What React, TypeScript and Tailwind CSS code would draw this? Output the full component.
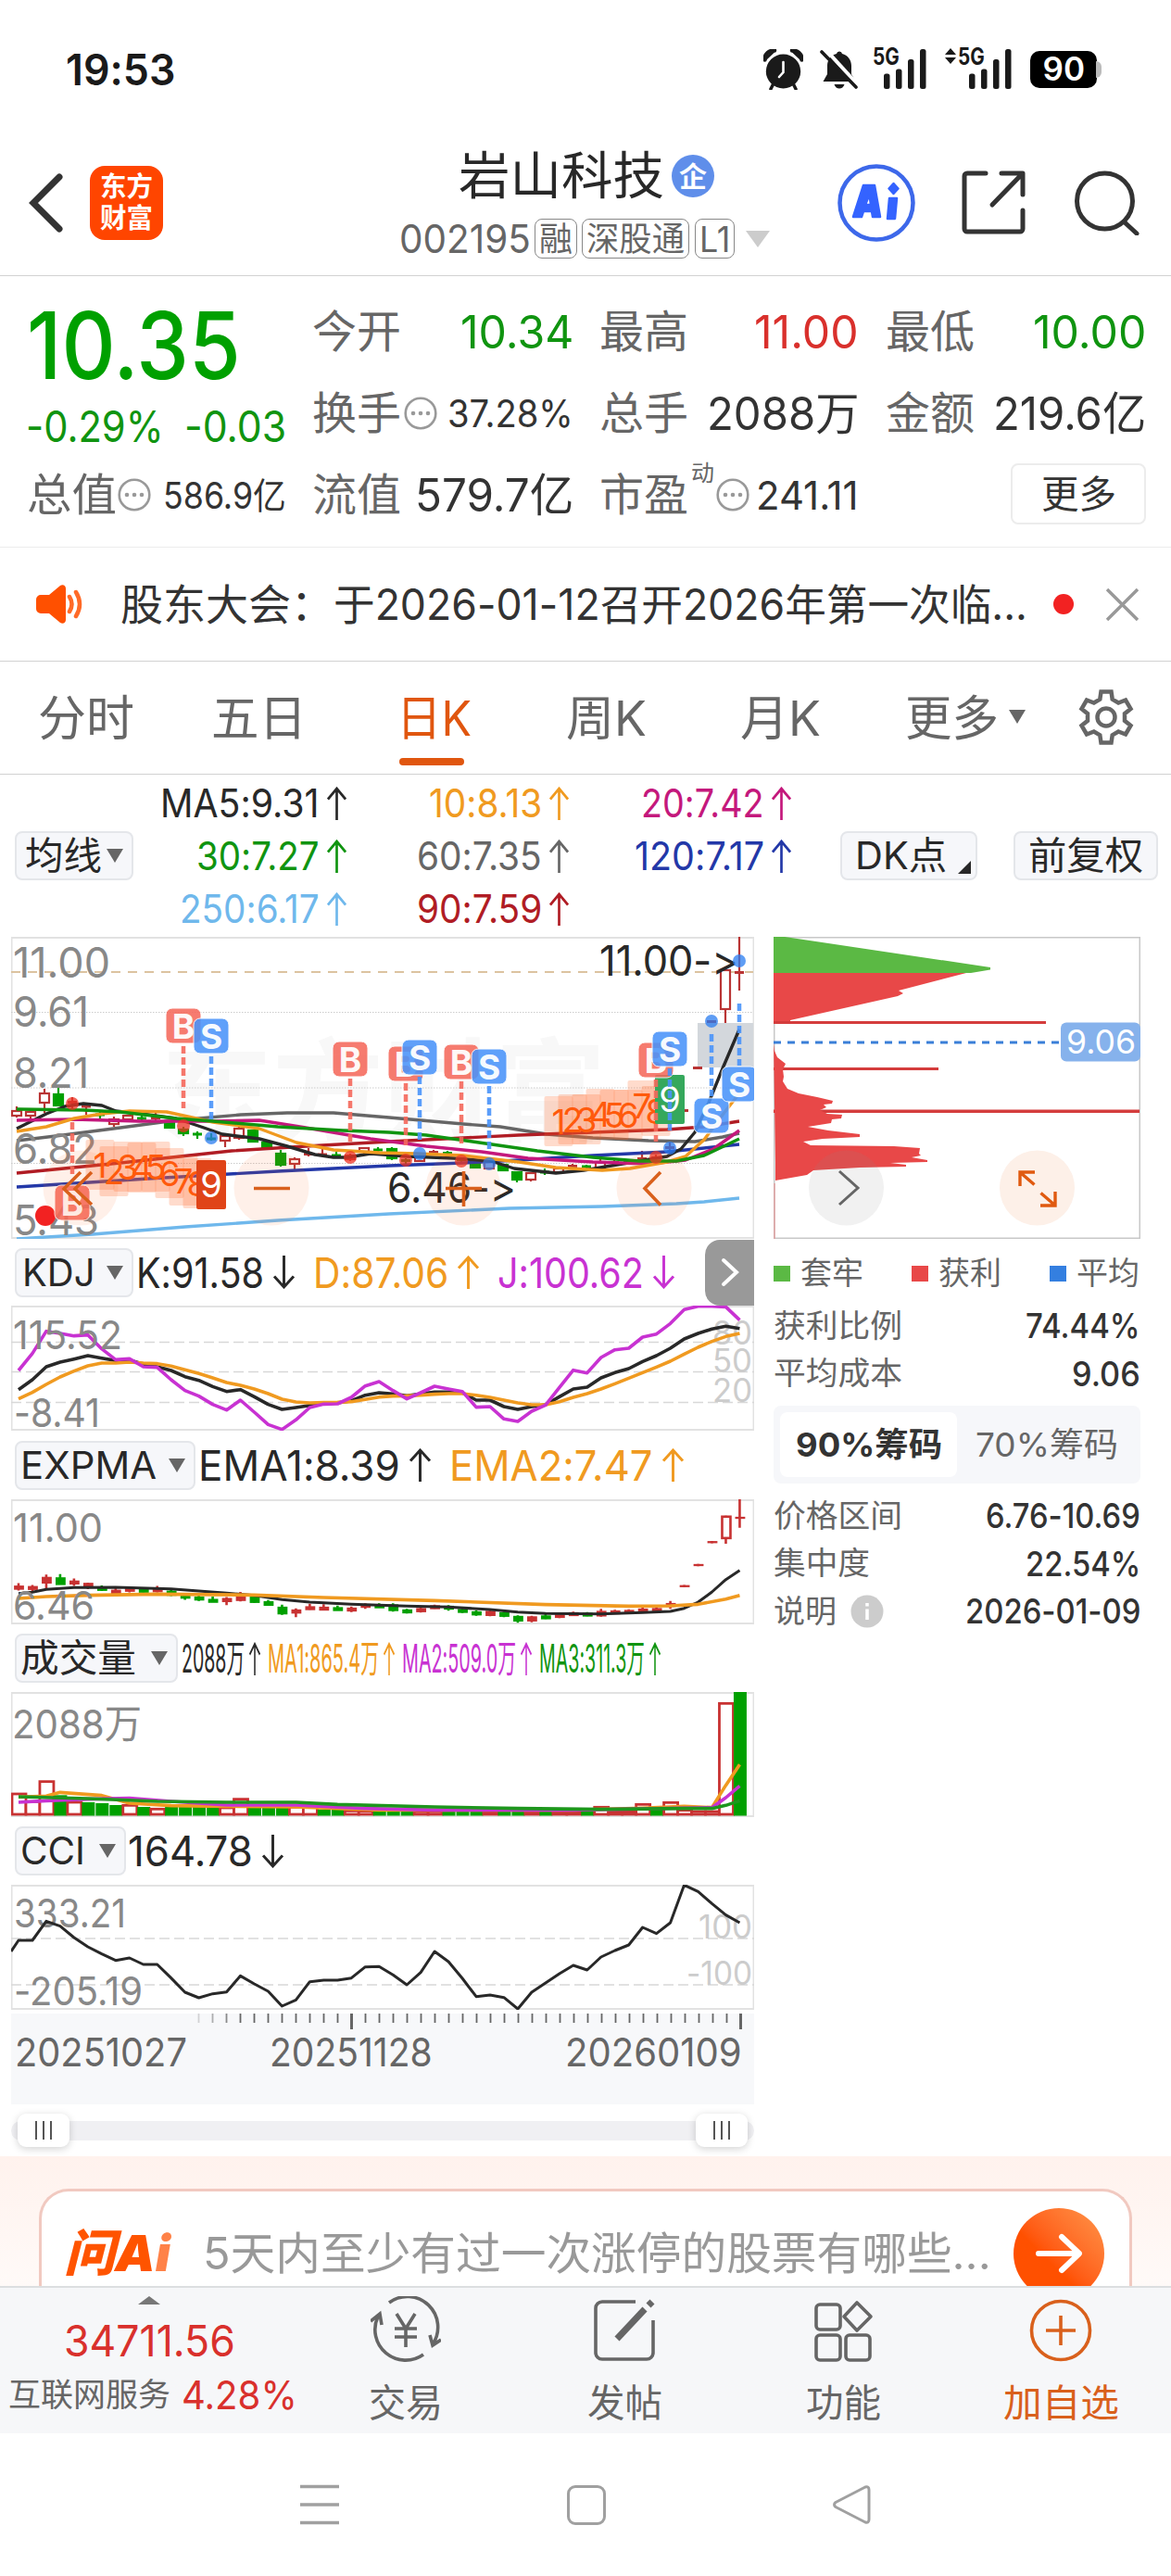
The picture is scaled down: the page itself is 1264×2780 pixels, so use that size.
import { useLayoutEffect, useRef } from "react";
import type { ReactNode } from "react";

const FONT = "Inter, 'Noto Sans CJK SC', sans-serif";

// ---------- chart data ----------

// kind, body top, body bottom, wick top, wick bottom
type Candle = ["r" | "g", number, number, number, number];

const CANDLES: Candle[] = [
  ["r", 1199, 1204, 1194, 1206], ["r", 1200, 1204, 1198, 1208], ["r", 1180, 1190, 1175, 1201], ["g", 1181, 1193, 1174, 1193],
  ["r", 1188, 1191, 1184, 1196], ["r", 1193, 1195, 1193, 1203], ["g", 1202, 1204, 1199, 1207], ["r", 1208, 1213, 1205, 1216],
  ["r", 1204, 1208, 1203, 1210], ["g", 1206, 1208, 1204, 1210], ["r", 1205, 1208, 1200, 1210], ["g", 1210, 1217, 1209, 1218],
  ["g", 1219, 1223, 1216, 1226], ["g", 1223, 1225, 1221, 1229], ["g", 1228, 1230, 1223, 1231], ["r", 1226, 1231, 1224, 1238],
  ["r", 1218, 1228, 1213, 1230], ["g", 1220, 1232, 1219, 1233], ["g", 1233, 1239, 1231, 1239], ["g", 1245, 1257, 1241, 1259],
  ["r", 1251, 1256, 1249, 1264], ["r", 1244, 1247, 1239, 1248], ["r", 1245, 1247, 1240, 1248], ["g", 1246, 1248, 1243, 1249],
  ["r", 1247, 1251, 1245, 1253], ["r", 1239, 1243, 1238, 1246], ["g", 1240, 1242, 1238, 1243], ["g", 1240, 1250, 1238, 1252],
  ["g", 1251, 1254, 1250, 1256], ["r", 1248, 1253, 1246, 1254], ["r", 1242, 1245, 1241, 1246], ["g", 1243, 1246, 1242, 1250],
  ["g", 1250, 1253, 1249, 1255], ["g", 1255, 1260, 1253, 1261], ["r", 1254, 1261, 1252, 1262], ["g", 1257, 1263, 1256, 1264],
  ["g", 1265, 1273, 1264, 1276], ["r", 1266, 1273, 1265, 1275], ["g", 1264, 1266, 1261, 1268], ["r", 1261, 1265, 1260, 1266],
  ["r", 1257, 1260, 1256, 1261], ["g", 1258, 1260, 1257, 1262], ["r", 1254, 1262, 1250, 1263], ["r", 1253, 1256, 1252, 1257],
  ["r", 1252, 1255, 1251, 1256], ["r", 1249, 1252, 1242, 1254], ["r", 1248, 1251, 1246, 1252], ["r", 1237, 1240, 1233, 1246],
  ["r", 1198, 1199, 1198, 1199], ["r", 1152, 1153, 1152, 1153], ["r", 1102, 1103, 1102, 1103], ["r", 1047, 1089, 1047, 1104],
  ["r", 1049, 1050, 1011, 1069],
];

const MA_LINES: [string, string][] = [
  ["#6fb8ec", "18,1337 100,1332 200,1324 300,1317 420,1310 550,1304 650,1302 730,1299 760,1297 798,1293"],
  ["#666666", "18,1231 60,1226 130,1217 190,1209 260,1203 310,1201 360,1201 420,1206 500,1213 540,1216 590,1224 640,1228 700,1231 750,1232 780,1227 798,1223"],
  ["#2338a8", "18,1281 160,1272 300,1264 420,1258 500,1255 560,1252 640,1247 720,1243 760,1239 798,1235"],
  ["#b01c24", "18,1266 130,1255 250,1242 330,1237 420,1232 500,1228 560,1225 640,1222 720,1219 760,1216 798,1210"],
  ["#282828", "18,1218 50,1202 70,1194 90,1191 110,1193 125,1199 160,1203 190,1207 220,1217 240,1224 280,1229 310,1237 340,1246 360,1249 375,1249 400,1245 440,1248 490,1250 530,1253 555,1261 600,1266 630,1263 660,1258 690,1253 720,1248 735,1240 750,1222 765,1190 780,1153 798,1111"],
  ["#c4187c", "18,1209 80,1208 150,1210 230,1210 280,1209 330,1217 400,1229 460,1237 520,1243 570,1250 640,1254 700,1256 740,1252 770,1240 798,1220"],
  ["#f09a20", "18,1221 50,1216 80,1207 110,1202 140,1199 180,1200 230,1211 280,1218 320,1233 360,1241 410,1244 450,1245 500,1247 560,1254 600,1260 650,1263 680,1261 720,1254 740,1248 760,1230 780,1203 798,1180"],
  ["#109410", "18,1197 90,1198 130,1200 190,1207 230,1210 300,1216 370,1220 420,1222 460,1225 510,1232 580,1242 640,1249 690,1253 730,1253 760,1247 798,1229"],
];

// kind, x, badge y, dot y, dash from, dash to
type Mark = ["B" | "S", number, number, number, number, number];

const MARKS: Mark[] = [
  ["B", 78, 1298, 1191, 1211, 1267],
  ["B", 198, 1107, 1215, 1129, 1196],
  ["S", 228, 1118, 1228, 1140, 1210],
  ["B", 378, 1143, 1249, 1164, 1232],
  ["B", 438, 1148, 1252, 1169, 1236],
  ["S", 453, 1141, 1245, 1162, 1230],
  ["B", 498, 1146, 1253, 1167, 1234],
  ["S", 528, 1151, 1256, 1172, 1240],
  ["B", 708, 1144, 1249, 1165, 1232],
  ["S", 723, 1132, 1239, 1153, 1220],
  ["S", 768, 1204, 1102, 1116, 1183],
  ["S", 798, 1170, 1037, 1083, 1150],
];

// TD sequence digits: x, vertical centre
const SEQ_A = [[108, 1257], [123, 1264], [138, 1259], [153, 1260], [168, 1259], [183, 1266], [198, 1274], [213, 1277]];
const SEQ_B = [[603, 1210], [618, 1208], [633, 1208], [648, 1202], [663, 1203], [678, 1203], [693, 1193], [708, 1199]];

// sub chart series are stored in thirds of a pixel
const KDJ_K = [332, 300, 258, 243, 233, 222, 230, 238, 236, 250, 258, 270, 290, 302, 322, 338, 332, 355, 380, 396, 390, 383, 378, 375, 368, 350, 342, 346, 352, 346, 340, 340, 342, 366, 366, 387, 396, 387, 381, 355, 330, 324, 294, 277, 264, 241, 222, 198, 168, 150, 136, 127, 134];
const KDJ_D = [362, 341, 315, 291, 272, 255, 246, 246, 243, 246, 248, 256, 268, 280, 294, 309, 318, 330, 345, 363, 372, 375, 374, 373, 371, 364, 356, 353, 352, 350, 347, 345, 345, 350, 357, 366, 375, 381, 381, 371, 357, 345, 330, 313, 295, 277, 259, 240, 217, 195, 176, 160, 150];
const KDJ_J = [270, 215, 143, 150, 158, 155, 200, 235, 232, 258, 260, 300, 335, 353, 380, 398, 366, 405, 445, 461, 430, 390, 379, 378, 357, 320, 306, 335, 362, 342, 321, 330, 338, 389, 387, 427, 435, 402, 382, 325, 269, 278, 228, 203, 198, 162, 152, 118, 73, 62, 62, 64, 107];
const CCI = [852, 852, 790, 806, 843, 873, 896, 917, 909, 930, 930, 974, 1020, 1038, 1025, 1019, 967, 993, 1017, 1065, 1045, 986, 981, 981, 974, 938, 937, 964, 996, 956, 888, 921, 975, 1034, 1029, 1037, 1074, 1020, 990, 960, 933, 948, 906, 885, 867, 810, 830, 795, 673, 694, 733, 770, 795];

const VOLUME = "r375 r400 r335 g382 r402 g405 g408 g414 r412 g420 r424 g420 g420 g420 g421 r420 r392 g420 g423 g420 r418 r418 g428 g429 r430 r431 g433 g430 g432 r432 r432 g433 g433 g433 r433 g434 g434 r433 g434 r433 r433 g434 r418 r433 r433 r409 g425 r403 r428 r432 r432 r82 g48".split(" ");

// sparse [index, value] series
const EMA1 = [[0, 990], [1, 986], [2, 977], [4, 971], [7, 970], [11, 975], [15, 989], [17, 996], [19, 1010], [21, 1018], [24, 1025], [28, 1031], [31, 1034], [34, 1042], [36, 1050], [38, 1055], [42, 1056], [45, 1052], [47, 1048], [48, 1038], [49, 1018], [50, 985], [51, 945], [52, 915]];
const EMA2 = [[0, 1006], [2, 1000], [5, 996], [10, 992], [17, 995], [22, 1003], [30, 1013], [38, 1026], [44, 1031], [47, 1030], [49, 1025], [51, 1008], [52, 996]];
const VOL1 = [[0, 388], [2, 385], [3, 373], [6, 383], [8, 408], [11, 416], [15, 418], [20, 420], [26, 430], [40, 430], [45, 424], [48, 418], [50, 422], [51, 350], [52, 283]];
const VOL2 = [[0, 405], [2, 400], [5, 395], [8, 392], [11, 402], [15, 414], [20, 414], [25, 425], [30, 430], [40, 430], [50, 422], [51, 390], [52, 352]];
const VOL3 = [[0, 387], [5, 393], [10, 402], [15, 405], [20, 405], [23, 412], [30, 420], [36, 425], [42, 428], [48, 425], [50, 425], [51, 415], [52, 400]];

const xAt = (i: number) => 8 + i * 14.97;
const series = (ys: number[], top: number) => ys.map((y, i) => `${xAt(i)},${(y - top) / 3}`).join(" ");
const sparse = (pts: number[][], top: number) => pts.map(([i, y]) => `${xAt(i)},${(y - top) / 3}`).join(" ");

// ---------- small pieces ----------

// One-line text that shrinks or stretches to the width of its box
function T({ className = "", children }: { className?: string; children: ReactNode }) {
  const box = useRef<HTMLSpanElement>(null);
  const inner = useRef<HTMLSpanElement>(null);

  useLayoutEffect(() => {
    if (!box.current || !inner.current) return;
    const ratio = box.current.clientWidth / inner.current.offsetWidth;
    inner.current.style.transform = `scaleX(${ratio})`;
  }, []);

  return (
    <span ref={box} className={`block shrink-0 leading-none whitespace-nowrap ${className}`}>
      <span ref={inner} className="inline-block origin-left">
        {children}
      </span>
    </span>
  );
}

function Arrow({ down = false, className = "w-[22px]" }: { down?: boolean; className?: string }) {
  return (
    <svg viewBox="0 0 22 36" preserveAspectRatio="none" className={`h-[36px] shrink-0 ${className} ${down ? "rotate-180" : ""}`} fill="none" stroke="currentColor" strokeWidth="2.8">
      <path d="M11 36V2M1 13.5 11 2l10 11.5" />
    </svg>
  );
}

function Triangle({ className = "" }: { className?: string }) {
  return (
    <svg viewBox="0 0 18 15" preserveAspectRatio="none" className={`h-[15px] w-[18px] shrink-0 ${className}`} fill="currentColor">
      <path d="M0 0h18L9 15z" />
    </svg>
  );
}

function Dots({ className = "ml-[3px]" }: { className?: string }) {
  return (
    <svg viewBox="0 0 36 36" className={`h-[36px] w-[36px] shrink-0 text-[#999] ${className}`}>
      <circle cx="18" cy="18" r="16.3" fill="none" stroke="currentColor" strokeWidth="2.6" />
      <circle cx="10" cy="18" r="2.3" fill="currentColor" />
      <circle cx="18" cy="18" r="2.3" fill="currentColor" />
      <circle cx="26" cy="18" r="2.3" fill="currentColor" />
    </svg>
  );
}

function Picker({ label, className, labelClass }: { label: string; className: string; labelClass: string }) {
  return (
    <div className={`ml-1 flex h-[53px] shrink-0 items-center justify-between rounded-[8px] border-2 border-[#e4e6ea] bg-[#f6f7fa] pr-[9px] pl-[4px] ${className}`}>
      <T className={`text-[41px] text-[#282828] ${labelClass}`}>{label}</T>
      <Triangle className="text-[#666]" />
    </div>
  );
}

// Text drawn inside a chart, squeezed to an exact length
function ChartText({ x, y, w, size = 45, fill = "#888", children }: { x: number; y: number; w: number; size?: number; fill?: string; children: string }) {
  return (
    <text x={x} y={y} fontSize={size} fill={fill} textLength={w} lengthAdjust="spacingAndGlyphs" fontFamily={FONT}>
      {children}
    </text>
  );
}

// ---------- top of page ----------

function Signal() {
  return (
    <svg viewBox="0 0 46 43" className="h-[43px] w-[46px]" fill="#1a1a1a">
      <rect x="0" y="26.5" width="6.5" height="16.5" rx="2.5" />
      <rect x="13" y="21.5" width="6.5" height="21.5" rx="2.5" />
      <rect x="26" y="11" width="6.5" height="32" rx="2.5" />
      <rect x="39" y="0" width="6.5" height="43" rx="2.5" />
    </svg>
  );
}

function StatusBar() {
  return (
    <div className="flex h-[140px] items-center pt-[9px] pl-[71px]">
      <T className="w-[118px] text-[47px] font-semibold text-[#1a1a1a]">19:53</T>
      <svg viewBox="0 0 43 44" className="ml-[635px] h-[44px] w-[43px]">
        <ellipse cx="21.5" cy="24" rx="18.7" ry="18.5" fill="#1a1a1a" />
        <path d="M1.5 11.5C1.5 5 6 1.5 12 1.5M41.5 11.5C41.5 5 37 1.5 31 1.5" stroke="#1a1a1a" strokeWidth="4.5" fill="none" strokeLinecap="round" />
        <path d="M2 11 11 2.5M41 11 32 2.5" stroke="#1a1a1a" strokeWidth="3" />
        <path d="m10.5 38-2.5 5M32.5 38l2.5 5" stroke="#1a1a1a" strokeWidth="3.5" strokeLinecap="round" />
        <path d="M21.5 14v11l-4.5 5" stroke="#fff" strokeWidth="2.6" fill="none" strokeLinecap="round" />
      </svg>
      <svg viewBox="0 0 42 42" className="ml-[18px] h-[42px] w-[42px]" fill="#1a1a1a">
        <path d="M21 1.5a3 3 0 0 1 3 2.5c6 1.5 10 6.5 10 13v9l4.5 8H3.5L8 26v-9C8 10.5 12 5.5 18 4a3 3 0 0 1 3-2.5z" />
        <path d="M15.5 37h11c-1 3-3 4.5-5.5 4.5S16.5 40 15.5 37z" />
        <path d="M4 -3 44 41" stroke="#fff" strokeWidth="4" />
        <path d="M2 2l37 38" stroke="#1a1a1a" strokeWidth="3.6" strokeLinecap="round" />
      </svg>
      <div className="relative ml-[27px]">
        <Signal />
        <T className="absolute -top-[4px] -left-[12px] w-[29px] text-[25px] font-bold text-[#1a1a1a]">5G</T>
      </div>
      <div className="relative ml-[46px]">
        <Signal />
        <T className="absolute -top-[4px] -left-[12px] w-[29px] text-[25px] font-bold text-[#1a1a1a]">5G</T>
        <svg viewBox="0 0 12 17" className="absolute -top-px -left-[26px] h-[17px] w-[12px]" fill="#1a1a1a">
          <path d="M6 0l6 7H0zM6 17l6-7H0z" />
        </svg>
      </div>
      <div className="ml-[20px] flex h-[40px] w-[72px] items-center justify-center rounded-[10px] bg-black">
        <T className="w-[45px] text-[35px] font-semibold text-white">90</T>
      </div>
      <div className="-ml-px h-[18px] w-[6px] rounded-r-[6px] bg-[#bbb]" />
    </div>
  );
}

function Header() {
  return (
    <header className="flex h-[158px] items-center border-b border-[#d2d2d2] pl-[30px]">
      <svg viewBox="0 0 38 64" className="h-[64px] w-[38px]" fill="none" stroke="#333" strokeWidth="7" strokeLinecap="round">
        <path d="M34 4 6 32l28 28" />
      </svg>
      <div className="ml-[29px] flex h-[80px] w-[79px] flex-col items-center justify-center gap-[5px] rounded-[16px] bg-[#ff4500] text-white">
        <T className="w-[57px] text-[29px] font-bold">东方</T>
        <T className="w-[57px] text-[29px] font-bold">财富</T>
      </div>
      <div className="ml-[255px] flex w-[398px] flex-col">
        <div className="flex h-[60px] items-center pt-[3px] pl-[64px]">
          <T className="w-[222px] text-[55px] text-[#282828]">岩山科技</T>
          <div className="ml-[8px] flex h-[46px] w-[46px] items-center justify-center rounded-full bg-[#5f8eea] text-white">
            <T className="w-[30px] text-[30px] font-bold">企</T>
          </div>
        </div>
        <div className="mt-[18px] flex h-[43px] items-center text-[#666]">
          <T className="w-[142px] text-[43px]">002195</T>
          <div className="ml-[4px] flex h-[43px] items-center rounded-[8px] border border-[#888] px-[4px]">
            <T className="w-[36px] text-[36px]">融</T>
          </div>
          <div className="ml-[5px] flex h-[43px] items-center rounded-[8px] border border-[#888] px-[4px]">
            <T className="w-[106px] text-[36px]">深股通</T>
          </div>
          <div className="ml-[6px] flex h-[43px] items-center rounded-[8px] border border-[#888] px-[4px]">
            <T className="w-[33px] text-[38px]">L1</T>
          </div>
          <Triangle className="ml-[12px] h-[18px] w-[26px] text-[#ccc]" />
        </div>
      </div>
      <svg viewBox="0 0 84 84" className="ml-[75px] h-[84px] w-[84px]">
        <circle cx="42" cy="42" r="39.5" fill="none" stroke="#3d68ea" strokeWidth="4.5" />
        <g fill="#3463ff" stroke="#3463ff" strokeWidth="2.5" strokeLinejoin="round">
          <path fillRule="evenodd" d="M17 57 28 23h12l6 34h-8l-1-6h-9l-2 6zM30 44h6l-1.5-11z" />
          <path d="M56 37h8l-2 22h-8z" />
          <path d="M60.5 21l5 5.5-5 5.5-5-5.5z" />
        </g>
      </svg>
      <svg viewBox="0 0 69 69" className="ml-[50px] h-[69px] w-[69px]" fill="none" stroke="#333" strokeWidth="5" strokeLinecap="round" strokeLinejoin="round">
        <path d="M26 3H6a3 3 0 0 0-3 3v57a3 3 0 0 0 3 3h57a3 3 0 0 0 3-3V43M43 3h23v23M65 4 33 37" />
      </svg>
      <svg viewBox="0 0 70 70" className="ml-[53px] h-[70px] w-[70px]" fill="none" stroke="#333" strokeWidth="5" strokeLinecap="round">
        <circle cx="32.5" cy="33" r="30" />
        <path d="m54 56 13 12" />
      </svg>
    </header>
  );
}

function Metric({ label, width, size = "text-[49px]", color = "text-[#333]", icon = false, children }: { label: string; width: string; size?: string; color?: string; icon?: boolean; children: string }) {
  return (
    <div className="flex h-[88px] items-center">
      <T className="w-[96px] text-[48px] text-[#666]">{label}</T>
      {icon && <Dots />}
      <T className={`ml-auto ${width} ${size} ${color}`}>{children}</T>
    </div>
  );
}

function Quote() {
  return (
    <section className="flex h-[293px] border-b border-[#ececec] pl-[29px]">
      <div className="flex w-[280px] flex-col pt-[30px]">
        <div className="flex h-[89px] items-center">
          <T className="w-[231px] text-[100px] font-medium text-[#00a000]">10.35</T>
        </div>
        <div className="flex h-[88px] items-center justify-between pb-[3px] text-[#109410]">
          <T className="-ml-px w-[149px] text-[47px]">-0.29%</T>
          <T className="w-[110px] text-[47px]">-0.03</T>
        </div>
        <div className="flex h-[58px] items-center">
          <T className="w-[97px] text-[48px] text-[#666]">总值</T>
          <Dots className="ml-px" />
          <T className="ml-auto w-[133px] text-[39px] text-[#333]">586.9亿</T>
        </div>
      </div>
      <div className="ml-[28px] w-[282px] pt-[16px]">
        <Metric label="今开" width="w-[122px]" color="text-[#109410]">10.34</Metric>
        <Metric label="换手" width="w-[136px]" size="text-[41px]" icon>37.28%</Metric>
        <Metric label="流值" width="w-[171px]">579.7亿</Metric>
      </div>
      <div className="ml-[28px] w-[280px] pt-[16px]">
        <Metric label="最高" width="w-[113px]" color="text-[#d9302c]">11.00</Metric>
        <Metric label="总手" width="w-[164px]">2088万</Metric>
        <div className="flex h-[88px] items-center">
          <T className="w-[96px] text-[48px] text-[#666]">市盈</T>
          <T className="mb-[46px] ml-[3px] w-[25px] text-[24px] text-[#666]">动</T>
          <Dots className="ml-[2px]" />
          <T className="ml-auto w-[111px] text-[43px] text-[#333]">241.11</T>
        </div>
      </div>
      <div className="ml-[29px] w-[281px] pt-[16px]">
        <Metric label="最低" width="w-[122px]" color="text-[#109410]">10.00</Metric>
        <Metric label="金额" width="w-[165px]">219.6亿</Metric>
        <div className="flex h-[86px] items-center justify-end">
          <div className="flex h-[66px] w-[146px] items-center justify-center rounded-[8px] border-2 border-[#ececec]">
            <T className="w-[81px] text-[41px] text-[#333]">更多</T>
          </div>
        </div>
      </div>
    </section>
  );
}

function Notice() {
  return (
    <div className="flex h-[123px] items-center border-b border-[#d2d2d2] pl-[39px]">
      <svg viewBox="0 0 52 44" className="h-[44px] w-[52px]">
        <path d="M5 12h9L26 2c2.5-1.8 6-.5 6 3v34c0 3.5-3.5 4.8-6 3L14 32H5a5 5 0 0 1-5-5V17a5 5 0 0 1 5-5z" fill="#ff5000" />
        <path d="M36 14q5 8 0 16M43 9q8 13 0 26" fill="none" stroke="#ff6a28" strokeWidth="4.5" strokeLinecap="round" />
      </svg>
      <div className="ml-[39px] flex w-[979px] text-[46px] text-[#333]">
        <T className="w-[230px]">股东大会：</T>
        <T className="w-[749px]">于2026-01-12召开2026年第一次临...</T>
      </div>
      <div className="ml-[28px] h-[22px] w-[22px] rounded-full bg-[#f22222]" />
      <svg viewBox="0 0 35 35" className="ml-[35px] h-[35px] w-[35px]" stroke="#999" strokeWidth="3.5">
        <path d="M1 1l33 33M34 1 1 34" />
      </svg>
    </div>
  );
}

function Tabs() {
  return (
    <nav className="flex h-[122px] items-center border-b border-[#d2d2d2] pt-[2px] pl-[41px] text-[52px] text-[#666]">
      <T className="w-[104px]">分时</T>
      <T className="ml-[83px] w-[103px]">五日</T>
      <div className="relative ml-[97px] flex h-full items-center">
        <T className="w-[81px] text-[#e0560f]">日K</T>
        <div className="absolute bottom-[9px] left-[3px] h-[8px] w-[70px] rounded-full bg-[#e0560f]" />
      </div>
      <T className="ml-[102px] w-[87px]">周K</T>
      <T className="ml-[101px] w-[87px]">月K</T>
      <T className="ml-[91px] w-[101px]">更多</T>
      <Triangle className="mb-[4px] ml-[11px]" />
      <svg viewBox="0 0 60 60" className="mb-[4px] ml-[57px] h-[60px] w-[60px]" fill="none" stroke="#666" strokeWidth="4.5">
        <path d="M24.5 2.5h11l1.2 8.2 6.5 3.8 7.8-3 5.5 9.5-6.5 5.2v7.6l6.5 5.2-5.5 9.5-7.8-3-6.5 3.8-1.2 8.2h-11l-1.2-8.2-6.5-3.8-7.8 3L3.5 39l6.5-5.2v-7.6L3.5 21 9 11.5l7.8 3 6.5-3.8z" />
        <circle cx="30" cy="30" r="9.5" />
      </svg>
    </nav>
  );
}

function Ma({ color, width, children }: { color: string; width: string; children: string }) {
  return (
    <div className={`flex h-[57px] items-center justify-end gap-[8px] ${color}`}>
      <T className={`text-[42px] ${width}`}>{children}</T>
      <Arrow className="h-[32px] w-[21px]" />
    </div>
  );
}

function MaLegend() {
  return (
    <section className="mt-[2px] mb-[2px] flex h-[171px] items-center pl-[12px]">
      <Picker label="均线" className="w-[128px]" labelClass="ml-[5px] w-[83px]" />
      <div className="grid w-[710px] grid-cols-[230px_240px_240px]">
        <Ma color="text-[#282828]" width="w-[172px]">MA5:9.31</Ma>
        <Ma color="text-[#f09a20]" width="w-[122px]">10:8.13</Ma>
        <Ma color="text-[#c4187c]" width="w-[133px]">20:7.42</Ma>
        <Ma color="text-[#109410]" width="w-[133px]">30:7.27</Ma>
        <Ma color="text-[#666]" width="w-[135px]">60:7.35</Ma>
        <Ma color="text-[#2338a8]" width="w-[140px]">120:7.17</Ma>
        <Ma color="text-[#6fb8ec]" width="w-[151px]">250:6.17</Ma>
        <Ma color="text-[#b01c24]" width="w-[135px]">90:7.59</Ma>
      </div>
      <div className="ml-[53px] flex h-[53px] w-[148px] items-center rounded-[8px] border-2 border-[#e4e6ea] bg-[#f6f7fa] pl-[14px]">
        <T className="w-[99px] text-[41px] text-[#282828]">DK点</T>
        <svg viewBox="0 0 14 14" className="mt-[25px] ml-[12px] h-[14px] w-[14px]" fill="#282828">
          <path d="M14 0v14H0z" />
        </svg>
      </div>
      <div className="ml-[39px] flex h-[53px] w-[156px] items-center justify-center rounded-[8px] border-2 border-[#e4e6ea] bg-[#f6f7fa]">
        <T className="w-[124px] text-[41px] text-[#282828]">前复权</T>
      </div>
    </section>
  );
}

// ---------- charts ----------

function SeqDigits({ points }: { points: number[][] }) {
  return (
    <g>
      {points.map(([x, y], i) => (
        <rect key={i} x={x - 15.5} y={y - 27} width="31" height="54" rx="2" fill="#ff6a28" opacity=".24" />
      ))}
      {points.map(([x, y], i) => (
        <text key={i} x={x} y={y + 13.5} textAnchor="middle" fontSize="37" fill="#ff5a0c" fontFamily={FONT}>
          {i + 1}
        </text>
      ))}
    </g>
  );
}

function PriceChart() {
  return (
    <svg viewBox="12 1011 802 326" className="block h-[326px] w-[802px] overflow-hidden">
      <rect x="12.5" y="1012" width="801" height="324" fill="#fff" stroke="#e2e2e2" strokeWidth="2" />
      <text x="174" y="1222" fontSize="120" fontWeight="700" fill="#f8f8f8" textLength="480" fontFamily={FONT}>东方财富</text>
      <path d="M12 1049H813" stroke="#dcc3a0" strokeWidth="2" strokeDasharray="10 8" />
      {[1092.5, 1174, 1255.5].map((y) => (
        <path key={y} d={`M12 ${y}H813`} stroke="#ccc" strokeDasharray="1.5 1.5" />
      ))}
      <rect x="753" y="1104" width="60" height="48" fill="#d3d7dc" />

      {CANDLES.map(([kind, top, bottom, hi, lo], i) => {
        const x = 18 + i * 15;
        const color = kind === "r" ? "#b93434" : "#00a000";
        const flat = bottom - top < 4;
        return (
          <g key={i} stroke={color} strokeWidth="2.2">
            <path d={`M${x} ${hi}V${top}M${x} ${bottom}V${lo}`} />
            {flat ? (
              <path d={`M${x - 5} ${(top + bottom) / 2}h10`} strokeWidth="3" />
            ) : (
              <rect x={x - 5} y={top} width="10" height={bottom - top} fill={kind === "r" ? "#fff" : color} />
            )}
          </g>
        );
      })}

      {MA_LINES.map(([color, points]) => (
        <polyline key={color} points={points} fill="none" stroke={color} strokeWidth="3.4" strokeLinejoin="round" />
      ))}

      {[[14, 1055, 105, "11.00"], [14, 1108, 82, "9.61"], [14, 1174, 82, "8.21"], [14, 1256, 91, "6.82"], [14, 1333, 93, "5.43"]].map(([x, y, w, t]) => (
        <ChartText key={t} x={x as number} y={y as number} w={w as number}>{t as string}</ChartText>
      ))}
      <ChartText x={418} y={1298} w={139} fill="#282828">{"6.46->"}</ChartText>
      <ChartText x={647} y={1053} w={150} fill="#282828">{"11.00->"}</ChartText>

      <SeqDigits points={SEQ_A} />
      <SeqDigits points={SEQ_B} />
      <rect x="212" y="1252" width="32" height="53" rx="2" fill="#e04418" />
      <text x="228" y="1292" textAnchor="middle" fontSize="38" fill="#fff" fontFamily={FONT}>9</text>
      <rect x="707" y="1160" width="32" height="53" rx="2" fill="#35a85c" />
      <text x="723" y="1200" textAnchor="middle" fontSize="38" fill="#fff" fontFamily={FONT}>9</text>

      <circle cx="49" cy="1312" r="11" fill="#f22222" />
      {MARKS.map(([kind, x, y, dot, from, to]) => {
        const color = kind === "B" ? "#f5695c" : "#4a94fa";
        return (
          <g key={`${kind}${x}`}>
            <path d={`M${x} ${from}V${to}`} stroke={color} strokeWidth="4.5" strokeDasharray="8 4" opacity=".9" />
            <circle cx={x} cy={dot} r="7" fill={kind === "B" ? "#ee3324" : "#2a7cf0"} opacity=".75" />
            <rect x={x - 19} y={y - 19} width="38" height="38" rx="7" fill={color} opacity=".88" stroke="#fff" />
            <text x={x} y={y + 13.5} textAnchor="middle" fontSize="37" fontWeight="700" fill="#fff" opacity=".95" fontFamily="Inter">
              {kind}
            </text>
          </g>
        );
      })}

      {[87, 293, 500, 706].map((x) => (
        <circle key={x} cx={x} cy="1282" r="40.5" fill="#ff6a28" opacity=".1" />
      ))}
      <g fill="none" stroke="#d9601c" strokeWidth="3.6">
        <path d="M87 1265 69 1283l18 17M99 1265l-18 18 18 17" />
        <path d="M274 1282.5h39M481 1282.5h39M500.5 1264v38M713 1265l-17 17.5 17 18" />
      </g>
    </svg>
  );
}

function Frame({ dashes = [], children }: { dashes?: number[]; children: ReactNode }) {
  return (
    <svg viewBox="0 0 802 135" className="block h-[135px] w-[802px]">
      <rect x=".5" y="1" width="801" height="133" fill="#fff" stroke="#e2e2e2" strokeWidth="2" />
      {dashes.map((y) => (
        <path key={y} d={`M0 ${y}H802`} stroke="#d8d8d8" strokeWidth="1.5" strokeDasharray="11 5" />
      ))}
      {children}
    </svg>
  );
}

function Line({ points, color, width = 3.6 }: { points: string; color: string; width?: number }) {
  return <polyline points={points} fill="none" stroke={color} strokeWidth={width} strokeLinejoin="round" />;
}

function KdjChart() {
  return (
    <Frame dashes={[39.5, 71.5, 104.5]}>
      <ChartText x={757} y={42} w={43} size={35} fill="#ccc">80</ChartText>
      <ChartText x={757} y={72} w={43} size={35} fill="#ccc">50</ChartText>
      <ChartText x={757} y={104} w={43} size={35} fill="#ccc">20</ChartText>
      <Line points={series(KDJ_K, 60)} color="#282828" />
      <Line points={series(KDJ_D, 60)} color="#f09a20" />
      <Line points={series(KDJ_J, 60)} color="#c832d2" />
      <ChartText x={2} y={47} w={118} size={43}>115.52</ChartText>
      <ChartText x={3} y={131} w={93} size={43}>-8.41</ChartText>
    </Frame>
  );
}

function ExpmaChart() {
  const toY = (y: number) => 46 + (y - 1102) * 0.495;
  return (
    <Frame>
      {CANDLES.map(([kind, top, bottom, hi, lo], i) => {
        const color = kind === "r" ? "#c83232" : "#00a000";
        const h = Math.max(2.5, (bottom - top) * 0.55);
        const hollow = i === 51;
        return (
          <g key={i} stroke={color} strokeWidth="2.6">
            <path d={`M${xAt(i)} ${toY(hi) - 1}V${toY(top)}M${xAt(i)} ${toY(bottom)}V${toY(lo) + 1}`} />
            <rect x={xAt(i) - 4} y={toY(top)} width="9" height={i > 47 && !hollow ? 0.5 : h} fill={hollow ? "#fff" : color} strokeWidth={hollow ? 2.6 : 1.8} />
          </g>
        );
      })}
      <Line points={sparse(EMA1, 685)} color="#282828" width={3} />
      <Line points={sparse(EMA2, 685)} color="#f09a20" />
      <ChartText x={2} y={46} w={97} size={43}>11.00</ChartText>
      <ChartText x={2} y={130} w={88} size={43}>6.46</ChartText>
    </Frame>
  );
}

function VolumeChart() {
  return (
    <Frame>
      <ChartText x={1} y={50} w={140} size={43}>2088万</ChartText>
      {VOLUME.map((v, i) => {
        const red = v[0] === "r";
        const top = (Number(v.slice(1)) - 48) / 3;
        return red ? (
          <rect key={i} x={xAt(i) - 7} y={top + 1} width="15" height={131 - top} fill="#fff" stroke="#c83232" strokeWidth="2.8" />
        ) : (
          <rect key={i} x={xAt(i) - 6.5} y={top} width="14" height={133.5 - top} fill="#00a000" />
        );
      })}
      <Line points={sparse(VOL1, 48)} color="#f09a20" />
      <Line points={sparse(VOL2, 48)} color="#c832d2" />
      <Line points={sparse(VOL3, 48)} color="#1e961e" />
    </Frame>
  );
}

function CciChart() {
  return (
    <Frame dashes={[58, 108]}>
      <ChartText x={742} y={58} w={58} size={35} fill="#ccc">100</ChartText>
      <ChartText x={729} y={108} w={71} size={35} fill="#ccc">-100</ChartText>
      <ChartText x={3} y={46} w={121} size={43}>333.21</ChartText>
      <ChartText x={3} y={130} w={139} size={43}>-205.19</ChartText>
      <Line points={`0,72 ${series(CCI, 672)}`} color="#282828" width={3} />
    </Frame>
  );
}

function Reading({ color, width, down = false, children }: { color: string; width: string; down?: boolean; children: string }) {
  return (
    <div className={`flex items-center gap-[10px] ${color}`}>
      <T className={`text-[45px] ${width}`}>{children}</T>
      <Arrow down={down} className="w-[23px]" />
    </div>
  );
}

function VolReading({ color, width, children }: { color: string; width: string; children: string }) {
  return (
    <div className={`flex items-center gap-[5px] ${color}`}>
      <T className={`text-[42px] ${width}`}>{children}</T>
      <Arrow className="w-[12px]" />
    </div>
  );
}

function TimeAxis() {
  return (
    <div className="mt-[4px] flex h-[98px] flex-col bg-[#f7f8fa]">
      <svg viewBox="0 0 802 18" className="block h-[18px] w-[802px]">
        {Array.from({ length: 40 }, (_, k) => k + 13).map((i) => {
          const major = i === 24 || i === 52;
          const x = 7.5 + i * 15;
          return (
            <path key={i} d={`M${x} 0V${major ? 17 : 10}`} stroke="#666" strokeWidth={major ? 3 : 1.8} opacity={i < 16 ? 0.25 + (i - 13) * 0.25 : 1} />
          );
        })}
      </svg>
      <div className="mt-[1px] flex h-[44px] items-center justify-between pr-[13px] pl-[4px] text-[43px] text-[#666]">
        <T className="w-[186px]">20251027</T>
        <T className="w-[176px]">20251128</T>
        <T className="ml-[54px] w-[191px]">20260109</T>
      </div>
    </div>
  );
}

function Handle() {
  return (
    <div className="flex h-[36px] w-[56px] items-center justify-center gap-[6px] rounded-[9px] bg-white shadow-[0_2px_8px_rgba(0,0,0,0.18)]">
      <div className="h-[20px] w-[2px] bg-[#555]" />
      <div className="h-[20px] w-[2px] bg-[#555]" />
      <div className="h-[20px] w-[2px] bg-[#555]" />
    </div>
  );
}

function RangeSlider() {
  return (
    <div className="flex h-[56px] items-center">
      <div className="flex h-[21px] w-full items-center justify-between rounded-full bg-[#f0f0f3] px-[7px]">
        <Handle />
        <Handle />
      </div>
    </div>
  );
}

// ---------- chip distribution ----------

function ChipChart() {
  return (
    <svg viewBox="0 0 396 326" className="block h-[326px] w-[396px]">
      <rect x=".75" y=".75" width="394.5" height="324.5" fill="#fff" stroke="#c8c8c8" strokeWidth="1.5" />
      <path d="M0 0h12L234 33v2.5L213 39H0z" fill="#5bb944" />
      <path d="M0 39h208l-73 19 5 3-6 3L18 90v3H0z" fill="#e84848" />
      <g fill="#d43c3c">
        <rect x="0" y="91" width="294" height="3" />
        <rect x="0" y="141" width="178" height="3" />
        <rect x="0" y="186.5" width="395" height="3.5" />
      </g>
      <path
        d="M0 115l1 8 3 7 9 7-3 6 1 8-1 5 5 8 12 5 20 4 17 4-1 3-9 1 3 3-7 3 8 4 16 1-1 4-10 1-1 4-25 4 22 4 34 4 0 3-40 2-21 3 8 4 90 1 28 2-1 6 2 2-10 2 17 3v2l-40 1 17 2v2l-50 1-50 3-7 5-34 6v-20z"
        fill="#e84848"
      />
      <path d="M1 266v60" stroke="#e0a0a0" strokeWidth="1.5" />
      <path d="M0 114H310" stroke="#3a7fd8" strokeWidth="3" strokeDasharray="8 7" />
      <rect x="310" y="92.5" width="86" height="42" rx="6" fill="#86b2ec" />
      <ChartText x={316} y={126} w={75} size={36} fill="#fff">9.06</ChartText>
      <circle cx="78.5" cy="271" r="40.5" fill="#888" opacity=".12" />
      <path d="m71 253 20 18-20 18" fill="none" stroke="#666" strokeWidth="3" />
      <circle cx="284.5" cy="271" r="40.5" fill="#fdf0e8" />
      <path d="M266 269v-15h16M266.5 254.5l15 13M304 275v15h-16M303.5 289.5l-15-13" fill="none" stroke="#e05a10" strokeWidth="3.4" />
    </svg>
  );
}

function ChipRow({ label, width, info = false, labelWidth, children }: { label: string; width: string; info?: boolean; labelWidth: string; children: string }) {
  return (
    <div className="flex h-[51.5px] items-center">
      <T className={`text-[34px] text-[#666] ${labelWidth}`}>{label}</T>
      {info && (
        <svg viewBox="0 0 36 36" className="ml-[15px] h-[36px] w-[36px]">
          <circle cx="18" cy="18" r="17.5" fill="#ccc" />
          <path d="M18 15.5V27M18 9v3.5" stroke="#fff" strokeWidth="3.5" />
        </svg>
      )}
      <T className={`ml-auto text-[37px] font-medium text-[#333] ${width}`}>{children}</T>
    </div>
  );
}

function ChipPanel() {
  return (
    <aside className="ml-[21px] w-[396px]">
      <ChipChart />
      <div className="flex h-[74px] items-center text-[34px] text-[#666]">
        <div className="h-[17px] w-[18px] bg-[#5bb944]" />
        <T className="ml-[11px] w-[68px]">套牢</T>
        <div className="ml-[52px] h-[17px] w-[18px] bg-[#e84848]" />
        <T className="ml-[11px] w-[68px]">获利</T>
        <div className="ml-[52px] h-[17px] w-[18px] bg-[#347fe0]" />
        <T className="ml-[11px] w-[68px]">平均</T>
      </div>
      <div className="-mt-[6px]">
        <ChipRow label="获利比例" labelWidth="w-[139px]" width="w-[124px]">74.44%</ChipRow>
        <ChipRow label="平均成本" labelWidth="w-[139px]" width="w-[74px]">9.06</ChipRow>
      </div>
      <div className="mt-[9px] flex h-[84px] items-center rounded-[8px] bg-[#f6f7fa] px-[7px]">
        <div className="flex h-[70px] w-[191px] items-center justify-center rounded-[8px] bg-white">
          <T className="w-[158px] text-[36px] font-bold text-[#333]">90%筹码</T>
        </div>
        <div className="flex flex-1 items-center justify-center">
          <T className="ml-[3px] w-[154px] text-[36px] text-[#666]">70%筹码</T>
        </div>
      </div>
      <div className="mt-[9px]">
        <ChipRow label="价格区间" labelWidth="w-[139px]" width="w-[167px]">6.76-10.69</ChipRow>
        <ChipRow label="集中度" labelWidth="w-[104px]" width="w-[124px]">22.54%</ChipRow>
        <ChipRow label="说明" labelWidth="w-[68px]" width="w-[189px]" info>2026-01-09</ChipRow>
      </div>
    </aside>
  );
}

// ---------- bottom ----------

function AskBar() {
  return (
    <div className="h-[140px] overflow-hidden bg-gradient-to-b from-[#fff2ed] to-[#fffaf8] px-[42px] pt-[35px]">
      <div className="flex h-[136px] items-center rounded-t-[32px] border-[3px] border-b-0 border-[#f1c9c0] bg-white pl-[24px]">
        <T className="w-[115px] text-[54px] font-black text-[#ff5400] italic">
          问A<span className="text-[#ff8248]">i</span>
        </T>
        <T className="ml-[35px] w-[851px] text-[48px] text-[#999]">5天内至少有过一次涨停的股票有哪些...</T>
        <div className="ml-[24px] flex h-[98px] w-[98px] shrink-0 items-center justify-center rounded-full bg-gradient-to-tr from-[#ff5000] from-40% to-[#ff9448]">
          <svg viewBox="0 0 50 44" className="h-[44px] w-[50px]" fill="none" stroke="#fff" strokeWidth="6" strokeLinecap="round" strokeLinejoin="round">
            <path d="M3 22h43M28 4l19 18-19 18" />
          </svg>
        </div>
      </div>
    </div>
  );
}

function BarItem({ label, width, color = "text-[#666]", className, children }: { label: string; width: string; color?: string; className: string; children: ReactNode }) {
  return (
    <div className={`flex flex-col items-center pt-[9px] ${color} ${className}`}>
      <svg viewBox="0 0 76 72" className="h-[72px] w-[76px]" fill="none" stroke="currentColor" strokeWidth="3.6">
        {children}
      </svg>
      <T className={`mt-[23px] text-[41px] ${width}`}>{label}</T>
    </div>
  );
}

function BottomBar() {
  return (
    <div className="flex h-[159px] border-t-2 border-[#dcdee0] bg-[#f6f7f9]">
      <div className="flex w-[322px] flex-col items-center pt-[9px]">
        <svg viewBox="0 0 24 9" className="h-[9px] w-[24px]" fill="#777">
          <path d="M12 0l12 9H0z" />
        </svg>
        <T className="mt-[15px] w-[185px] text-[47px] text-[#d9302c]">34711.56</T>
        <div className="mt-[14px] flex w-full items-center pl-[9px]">
          <T className="w-[175px] text-[35px] text-[#666]">互联网服务</T>
          <T className="ml-[12px] w-[125px] text-[43px] text-[#d9302c]">4.28%</T>
        </div>
      </div>
      <BarItem label="交易" width="w-[80px]" className="w-[232px]">
        <path d="M20 7A33 33 0 0 1 67 52M57 63A33 33 0 0 1 8 22M0 27l10-8 2 12M76 47l-9 6-3-11" />
        <path d="m28 19 10 16 10-16M26 35h24M26 44h24M38 35v20" />
      </BarItem>
      <BarItem label="发帖" width="w-[81px]" className="w-[240px]">
        <path d="M50 6H14a7 7 0 0 0-7 7v48a7 7 0 0 0 7 7h48a7 7 0 0 0 7-7V26" />
        <path d="m30 46 30-32" strokeWidth="7" />
        <path d="m64 10 4-4" strokeWidth="7" />
      </BarItem>
      <BarItem label="功能" width="w-[81px]" className="w-[232px]">
        <rect x="9" y="9" width="26" height="27" rx="4" />
        <rect x="9" y="42" width="26" height="27" rx="4" />
        <rect x="41" y="42" width="26" height="27" rx="4" />
        <path d="m53 7 15 15-15 15-14-15z" strokeLinejoin="round" />
      </BarItem>
      <BarItem label="加自选" width="w-[125px]" color="text-[#d9601c]" className="w-[238px]">
        <circle cx="38" cy="37" r="31.5" />
        <path d="M38 21v32M22 37h32" />
      </BarItem>
    </div>
  );
}

function SystemNav() {
  return (
    <div className="flex h-[154px] items-center bg-white pl-[324px] text-[#a0a0a0]">
      <svg viewBox="0 0 42 44" className="h-[44px] w-[42px]" stroke="currentColor" strokeWidth="3.4">
        <path d="M0 2.5h42M0 22h42M0 41.5h42" />
      </svg>
      <div className="ml-[246px] h-[43px] w-[42px] rounded-[9px] border-[3px] border-[#a0a0a0]" />
      <svg viewBox="0 0 42 44" className="ml-[244px] h-[44px] w-[42px]" fill="none" stroke="currentColor" strokeWidth="3" strokeLinejoin="round">
        <path d="M36 3 4 19.5q-3 2.5 0 5L36 41q4 1 4-3V6q0-4-4-3z" />
      </svg>
    </div>
  );
}

export default function App() {
  // calt is off so that "->" stays two characters in Inter
  return (
    <div className="h-[2780px] w-[1264px] overflow-hidden bg-white font-['Inter','Noto_Sans_CJK_SC',sans-serif] [font-feature-settings:'calt'_0]">
      <StatusBar />
      <Header />
      <Quote />
      <Notice />
      <Tabs />
      <MaLegend />

      <div className="flex h-[1316px] items-start pl-[12px]">
        <div className="w-[802px]">
          <PriceChart />
          <div className="flex h-[72px] items-center">
            <Picker label="KDJ" className="w-[128px]" labelClass="ml-[2px] w-[79px]" />
            <div className="ml-[3px] flex gap-[20px]">
              <Reading color="text-[#282828]" width="w-[138px]" down>K:91.58</Reading>
              <Reading color="text-[#f09a20]" width="w-[146px]">D:87.06</Reading>
              <Reading color="text-[#c832d2]" width="w-[158px]" down>J:100.62</Reading>
            </div>
            <div className="ml-auto flex h-[71px] w-[53px] items-center justify-center rounded-l-[16px] bg-[#999]">
              <svg viewBox="0 0 20 32" className="h-[32px] w-[20px]" fill="none" stroke="#fff" strokeWidth="4" strokeLinecap="round">
                <path d="m3 3 14 13L3 29" />
              </svg>
            </div>
          </div>
          <KdjChart />
          <div className="flex h-[74px] items-center">
            <Picker label="EXPMA" className="w-[195px]" labelClass="w-[147px]" />
            <div className="ml-[3px] flex gap-[20px]">
              <Reading color="text-[#282828]" width="w-[218px]">EMA1:8.39</Reading>
              <Reading color="text-[#f09a20]" width="w-[220px]">EMA2:7.47</Reading>
            </div>
          </div>
          <ExpmaChart />
          <div className="flex h-[73px] items-center">
            <Picker label="成交量" className="w-[176px]" labelClass="w-[125px]" />
            <div className="ml-[4px] flex gap-[8px]">
              <VolReading color="text-[#282828]" width="w-[68px]">2088万</VolReading>
              <VolReading color="text-[#f09a20]" width="w-[120px]">MA1:865.4万</VolReading>
              <VolReading color="text-[#c832d2]" width="w-[123px]">MA2:509.0万</VolReading>
              <VolReading color="text-[#109410]" width="w-[114px]">MA3:311.3万</VolReading>
            </div>
          </div>
          <VolumeChart />
          <div className="flex h-[73px] items-center">
            <Picker label="CCI" className="w-[120px]" labelClass="w-[70px]" />
            <div className="ml-[2px] flex">
              <Reading color="text-[#282828]" width="w-[135px]" down>164.78</Reading>
            </div>
          </div>
          <CciChart />
          <TimeAxis />
          <RangeSlider />
        </div>
        <ChipPanel />
      </div>

      <AskBar />
      <BottomBar />
      <SystemNav />
    </div>
  );
}
